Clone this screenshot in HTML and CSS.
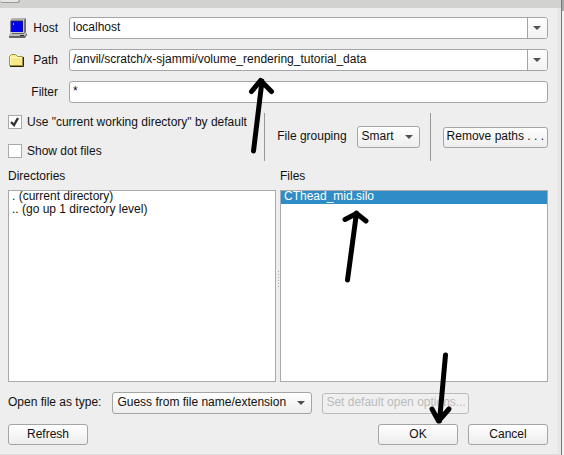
FILE: index.html
```html
<!DOCTYPE html>
<html lang="en">
<head>
<meta charset="utf-8">
<title>File open</title>
<link rel="stylesheet" href="styles.css">
</head>
<body>
<div class="screen">
  <main class="dialog">
    <div class="titlebar"><span class="titlebar-button"></span></div>
    <form class="content">
      <div class="fields">
        <label class="field-label" for="host">
          <svg width="20" height="20" viewBox="0 0 20 20" aria-hidden="true">
            <path d="M4 0H18V14L16 16H2V2Z" fill="#b4b4b4"/>
            <path d="M16 2L18 0V14L16 16Z" fill="#707070"/>
            <path d="M2 2H16V15H2Z" fill="#ccc"/>
            <path d="M3 3H15V14H3Z" fill="#0000e8"/>
            <path d="M3 14V3H15" fill="none" stroke="#333348"/>
            <path d="M5 5h1v2H5Z" fill="#20dcff"/>
            <path d="M3 15H18L19 16L17 19H1V17Z" fill="#b9b9b9"/>
            <path d="M1 18H17L19 15V17L17 20H1ZM4 15H16V16H4Z" fill="#666"/>
            <path d="M12 17.500h4" stroke="#333"/>
          </svg>
          <span>Host</span>
        </label>
        <div class="combo">
          <input id="host" type="text" value="localhost">
          <button type="button" aria-label="Recent hosts"><svg width="8" height="4" viewBox="0 0 8 4"><path d="M0 0H8L4 4Z" fill="#505050"/></svg></button>
        </div>
        <label class="field-label" for="path">
          <svg width="20" height="16" viewBox="0 0 20 16" aria-hidden="true">
            <path d="M1.500 13.500V4.500L3.500 2.500H7.500L9.500 4.500H14.500V13.500Z" fill="#ffee87" stroke="#9b913d"/>
            <path d="M2 13V6H14V13Z" fill="#f8e984"/>
            <path d="M2.500 13V5.500H14" fill="none" stroke="#fffbd0"/>
            <path d="M2 14.500H15.500V5" fill="none" stroke="#282400"/>
          </svg>
          <span>Path</span>
        </label>
        <div class="combo">
          <input id="path" type="text" value="/anvil/scratch/x-sjammi/volume_rendering_tutorial_data">
          <button type="button" aria-label="Recent paths"><svg width="8" height="4" viewBox="0 0 8 4"><path d="M0 0H8L4 4Z" fill="#505050"/></svg></button>
        </div>
        <label class="field-label filter-label" for="filter">Filter</label>
        <div class="combo"><input id="filter" type="text" value="*"></div>
      </div>

      <div class="options">
        <div class="checks">
          <label><input type="checkbox" checked><svg class="tick" width="14" height="14" viewBox="0 0 14 14" aria-hidden="true"><path d="M3 7L6 10L10 3" fill="none" stroke="#333" stroke-width="2.400"/></svg>Use "current working directory" by default</label>
          <label><input type="checkbox">Show dot files</label>
        </div>
        <div class="grouping">
          <label for="grouping">File grouping</label>
          <span class="select"><select id="grouping"><option>Smart</option></select><svg width="8" height="4" viewBox="0 0 8 4" aria-hidden="true"><path d="M0 0H8L4 4Z" fill="#505050"/></svg></span>
        </div>
        <button type="button" class="button">Remove paths . . .</button>
      </div>

      <div class="panes">
        <section class="pane">
          <h2>Directories</h2>
          <ul><li>. (current directory)</li><li>.. (go up 1 directory level)</li></ul>
        </section>
        <div class="splitter"></div>
        <section class="pane">
          <h2>Files</h2>
          <ul><li class="selected">CThead_mid.silo</li></ul>
        </section>
      </div>

      <div class="type-row">
        <label for="type">Open file as type:</label>
        <span class="select"><select id="type"><option>Guess from file name/extension</option></select><svg width="8" height="4" viewBox="0 0 8 4" aria-hidden="true"><path d="M0 0H8L4 4Z" fill="#505050"/></svg></span>
        <button type="button" class="button" disabled>Set default open options...</button>
      </div>
      <div class="actions">
        <button type="button" class="button refresh">Refresh</button>
        <button type="button" class="button">OK</button>
        <button type="button" class="button">Cancel</button>
      </div>
    </form>
  </main>
  <div class="backdrop"></div>
  <svg class="arrows" width="564" height="455" viewBox="0 0 564 455" aria-hidden="true">
    <g fill="none" stroke="#000" stroke-width="5" stroke-linecap="round" stroke-linejoin="round">
      <path d="M253.500 151L262 81M251.500 91.500L260.500 80.500L271.500 91.500"/>
      <path d="M347.500 280L356.500 213M345 219.500L356.500 213.500L366 221"/>
      <path d="M445.500 355L439.500 421M432 409L438.500 421L449 409"/>
    </g>
  </svg>
</div>
</body>
</html>
```
FILE: styles.css
```css
* { box-sizing: border-box; }

body {
  margin: 0;
  background: #eee;
  color: #111;
  font: 12px/16px "Liberation Sans", Arial, sans-serif;
}

.screen {
  position: relative;
  display: flex;
  min-height: 100vh;
  overflow: hidden;
}

.dialog {
  flex: 1;
  display: flex;
  flex-direction: column;
  border-right: 4px solid #e7e7e4;
  border-bottom: 1px solid #ddd;
}

.titlebar { height: 8px; margin-right: -4px; background: #d2d2d0; }

.titlebar-button {
  display: block;
  width: 20px;
  height: 3px;
  border: solid #999;
  border-width: 0 1px 1px 0;
  border-radius: 0 0 3px 3px;
  background: #e5e5e5;
}

.backdrop {
  width: 3px;
  border-left: 1px solid #777;
  background: linear-gradient(#aaa 11px, #f2f2f2 11px);
}

.content {
  flex: 1;
  display: flex;
  flex-direction: column;
  padding: 9px 9px 9px 8px;
}

.fields {
  display: grid;
  grid-template-columns: 50px 1fr;
  gap: 10px 11px;
}

.field-label {
  display: flex;
  align-items: center;
  justify-content: space-between;
  height: 22px;
  padding-bottom: 1px;
}

.filter-label { justify-content: flex-end; }

input, button, select { margin: 0; color: inherit; font: inherit; }

.combo {
  display: flex;
  height: 22px;
  border: 1px solid #a5a5a5;
  border-radius: 3px;
  background: #fff;
  overflow: hidden;
}

.combo input {
  flex: 1;
  min-width: 0;
  padding: 0 3px 2px;
  border: 0;
  background: none;
}

.combo button {
  display: flex;
  align-items: center;
  justify-content: center;
  width: 20px;
  padding: 0 2px 0 0;
  border: 0;
  border-left: 1px solid #a5a5a5;
  background: linear-gradient(#fff, #f2f2f2);
}

.options {
  display: flex;
  align-items: center;
  margin-top: 10px;
}

.checks {
  flex: 1;
  display: grid;
  gap: 13px;
}

.checks label {
  position: relative;
  display: flex;
  align-items: center;
  gap: 5px;
  padding-bottom: 1px;
  line-height: 15px;
}

.checks input {
  appearance: none;
  width: 14px;
  height: 14px;
  border: 1px solid #aaa;
  background: #fff;
}

.tick { position: absolute; left: 0; top: 0; }

.grouping {
  display: flex;
  align-items: center;
  gap: 10px;
  height: 48px;
  margin-right: 12px;
  padding: 0 10px 0 12px;
  border: solid #999;
  border-width: 0 1px;
}

.grouping label { padding-bottom: 2px; }

.select { position: relative; display: flex; }
.select svg { position: absolute; right: 7px; top: 9px; pointer-events: none; }

select, .button {
  height: 22px;
  border: 1px solid #a5a5a5;
  border-radius: 3px;
  background: linear-gradient(#fff, #ededed);
  white-space: nowrap;
}

select {
  appearance: none;
  padding: 0 24px 2px 4px;
}

.button { height: 21px; padding: 0 3px 2px; }

.panes {
  flex: 1;
  display: flex;
  margin-top: 7px;
}

.pane {
  flex: 1;
  display: flex;
  flex-direction: column;
  min-width: 0;
}

h2 {
  margin: 0 0 6px;
  font-size: 12px;
  font-weight: 400;
}

ul {
  flex: 1;
  margin: 0;
  padding: 0;
  border: 1px solid #aaa;
  background: #fff;
  list-style: none;
}

li { height: 13px; padding: 0 3px; line-height: 11px; }
.selected { background: #308cc6; color: #fff; }

.splitter {
  align-self: center;
  width: 4px;
  height: 17px;
  margin-top: 8px;
  background: linear-gradient(#aaa 1px, transparent 1px) 2px 0 / 1px 3px repeat-y;
}

.type-row {
  display: flex;
  align-items: center;
  gap: 10px;
  margin-top: 10px;
}

.type-row label { padding: 0 1px 2px 0; }
.type-row select { width: 200px; }
.type-row .button { width: 147px; }
.button:disabled { border-color: #bbb; color: #bbb; background: #f0f0f0; }

.actions {
  display: flex;
  gap: 10px;
  margin-top: 10px;
}

.actions .button { width: 80px; }
.refresh { margin-right: auto; }

.arrows {
  position: absolute;
  left: 0;
  top: 0;
  pointer-events: none;
}
```
